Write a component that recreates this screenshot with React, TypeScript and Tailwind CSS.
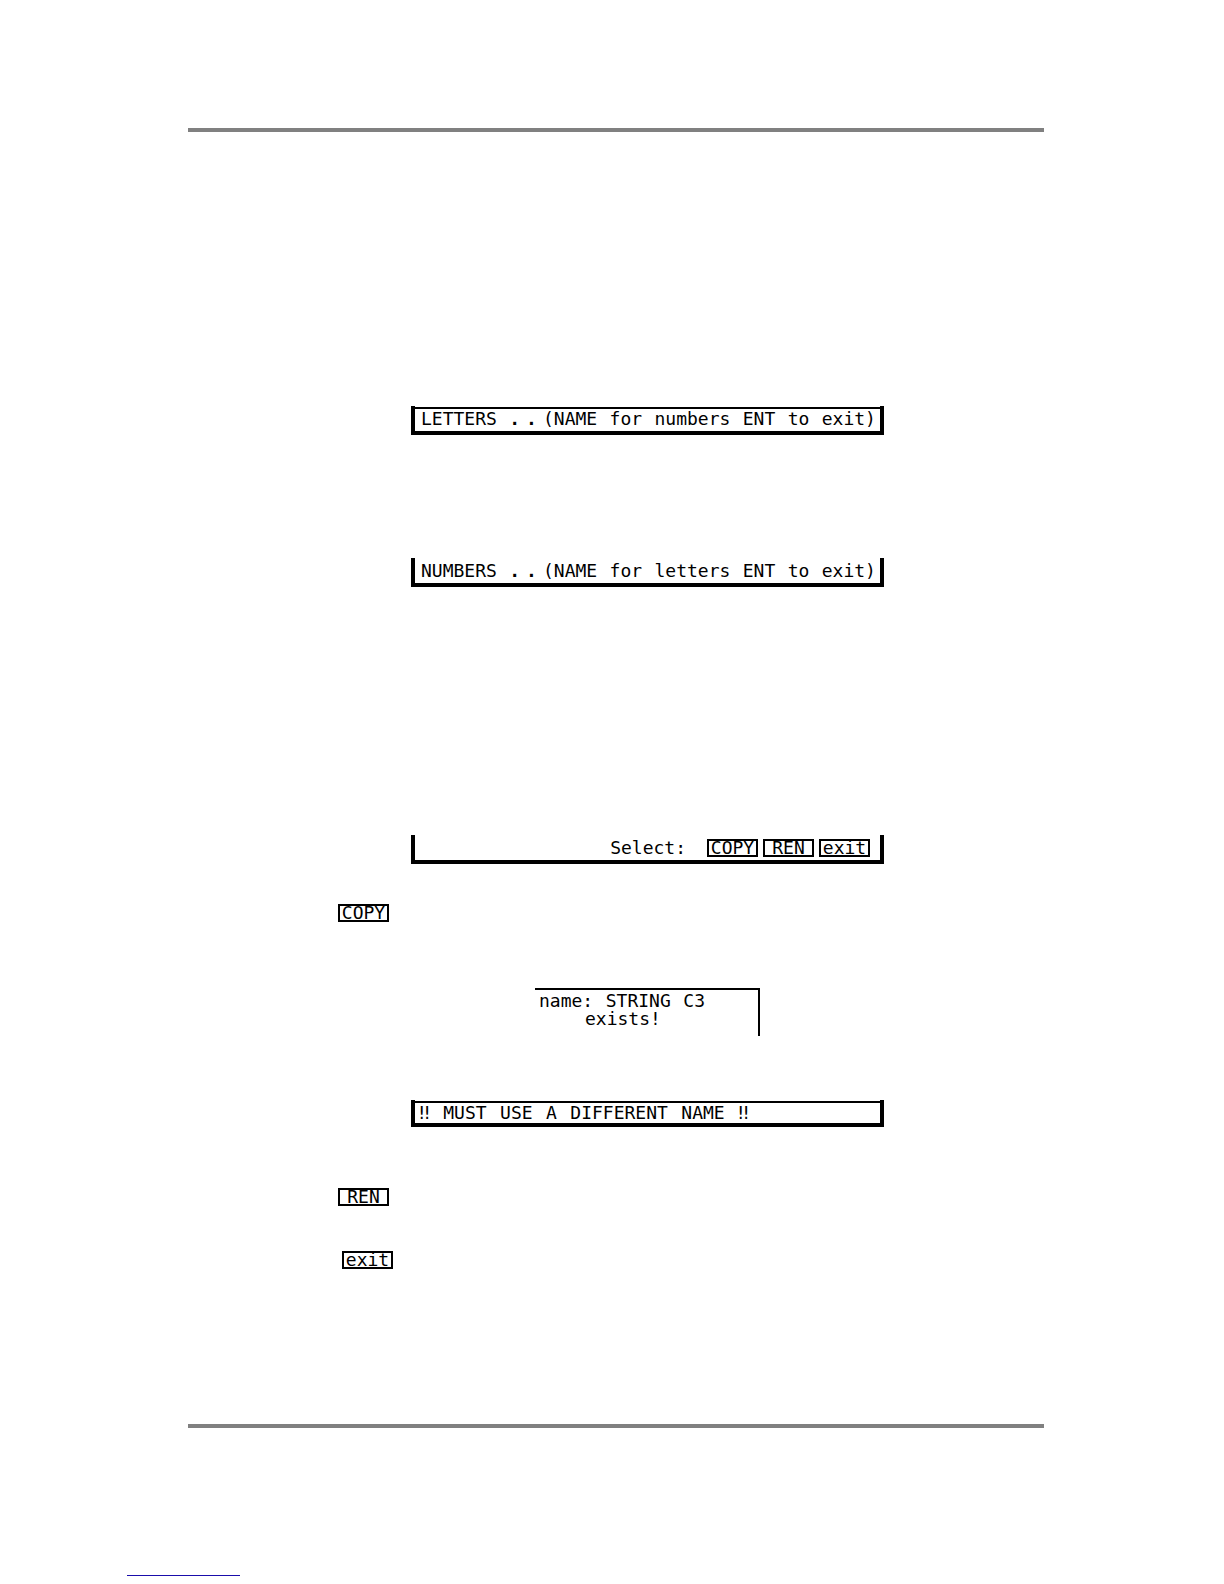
import type { ReactNode } from "react";
import clsx from "clsx";

const lettersHint = ["for", "numbers", "ENT", "to", "exit)"];
const numbersHint = ["for", "letters", "ENT", "to", "exit)"];
const nameWarning = ["‼", "MUST", "USE", "A", "DIFFERENT", "NAME", "‼"];

interface ScreenProps {
  topLine?: boolean;
  short?: boolean;
  className?: string;
  children: ReactNode;
}

// bottom strip of the LCD: thick frame on three sides, optional thin line on top
function Screen({ topLine, short, className, children }: ScreenProps) {
  return (
    <div className={clsx("ml-[73px] w-[473px] border-x-4 border-b-4 border-black pt-px", className)}>
      <div className={clsx("border-t-2", short ? "h-[22px]" : "h-6", topLine ? "border-black" : "border-transparent")}>
        {children}
      </div>
    </div>
  );
}

function Words({ words, className, children }: { words: string[]; className?: string; children?: ReactNode }) {
  return (
    <p className={clsx("flex justify-between", className)}>
      {children}
      {words.map((word, i) => (
        <span key={i}>{word}</span>
      ))}
    </p>
  );
}

function ModeHint({ mode, words }: { mode: string; words: string[] }) {
  return (
    <Words words={words} className="ml-1.5 mr-1 leading-5">
      <span>{mode}</span>
      <span className="flex gap-1.5">
        <b>.</b>
        <b>.</b>
        <span>(NAME</span>
      </span>
    </Words>
  );
}

function SoftKey({ label, className }: { label: string; className?: string }) {
  return (
    <button
      type="button"
      className={clsx(
        "flex h-[18px] w-[51px] shrink-0 items-center justify-center border-2 border-black leading-[14px]",
        className
      )}
    >
      {label}
    </button>
  );
}

export default function App() {
  return (
    <div className="min-h-screen bg-white pt-32 pb-2 font-['DejaVu_Sans_Mono',monospace] text-lg text-black">
      <main className="ml-[188px] mr-[180px] border-y-4 border-[#808080] pl-[150px] pt-[274px] pb-[155px]">
        <Screen topLine>
          <ModeHint mode="LETTERS" words={lettersHint} />
        </Screen>

        <Screen className="mt-[123px]">
          <ModeHint mode="NUMBERS" words={numbersHint} />
        </Screen>

        <Screen className="mt-[248px]">
          <div className="flex items-center justify-end gap-[5px] pr-2.5">
            <span className="mr-4 leading-5">Select:</span>
            <SoftKey label="COPY" />
            <SoftKey label="REN" />
            <SoftKey label="exit" />
          </div>
        </Screen>

        <SoftKey label="COPY" className="mt-10" />

        <div className="ml-[197px] mt-[66px] h-12 w-[225px] border-t-2 border-r-2 border-black pl-1 pt-0.5 leading-[18px]">
          <Words words={["name:", "STRING", "C3"]} className="w-[166px]" />
          <p className="pl-[46px]">exists!</p>
        </div>

        <Screen topLine short className="mt-16">
          <Words words={nameWarning} className="ml-1 w-[330px] leading-5" />
        </Screen>

        <SoftKey label="REN" className="mt-[61px]" />
        <SoftKey label="exit" className="ml-1 mt-[45px]" />
      </main>

      <footer className="mt-[147px] ml-[127px] w-[113px] border-b border-[#1a0dab]" />
    </div>
  );
}
